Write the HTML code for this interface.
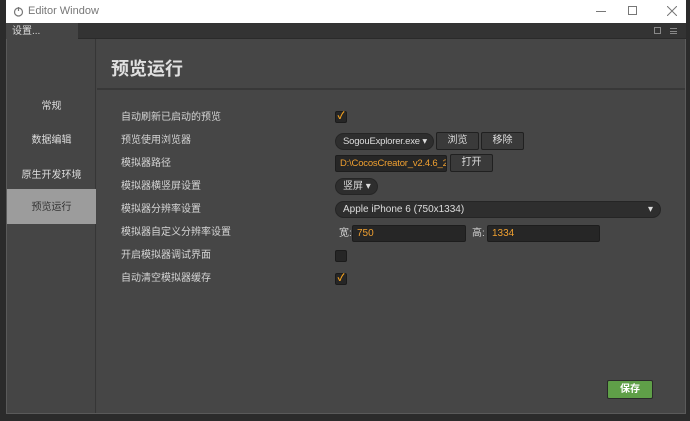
<!DOCTYPE html>
<html><head><meta charset="utf-8"><style>
*{margin:0;padding:0;box-sizing:border-box}
body{width:690px;height:421px;background:#2b2b2b;position:relative;overflow:hidden;font-family:"Liberation Sans","Noto Sans CJK SC",sans-serif;font-size:10px;color:#d0d0d0;line-height:12px}
.a{position:absolute}
.title{left:6px;top:0;width:680px;height:23px;background:#fff;color:#777;font-size:11px}
.tabbar{left:6px;top:23px;width:680px;height:16px;background:#333;border-bottom:1px solid #2a2a2a}
.tab{left:6px;top:23px;width:72px;height:17px;background:#454545;color:#ddd;padding:3px 0 0 6px}
.win{left:6px;top:39px;width:680px;height:375px;background:#454545;border:1px solid #5a5a5a;border-top:none}
.side{left:7px;top:39px;width:89px;height:374px;background:#454545;border-right:1px solid #363636}
.si{position:absolute;left:0;width:89px;text-align:center;color:#ddd}
.main{left:97px;top:39px;width:588px;height:374px;background:#464646}
.lbl{position:absolute;left:121px;color:#d4d4d4}
.cb{position:absolute;left:335px;width:12px;height:12px;background:#262626;border:1px solid #1b1b1b;border-radius:2px;color:#f0a020;font-size:10px;line-height:10px;text-align:center;font-weight:bold}
.pill{position:absolute;background:#2e2e2e;border:1px solid #252525;border-radius:9px;color:#ddd;padding-left:7px;height:17px;line-height:15px;white-space:nowrap;overflow:hidden}
.btn{position:absolute;background:#3a3a3a;border:1px solid #202020;border-radius:2px;color:#ddd;text-align:center;height:18px;line-height:16px}
.inp{position:absolute;background:#262626;border:1px solid #1d1d1d;border-radius:2px;color:#f0a030;padding-left:4px;height:17px;line-height:15px;overflow:hidden;white-space:nowrap}
</style></head><body>
<div class="a title"><svg class="a" style="left:7px;top:6px" width="11" height="11" viewBox="0 0 11 11"><circle cx="5.5" cy="6" r="4" fill="none" stroke="#777" stroke-width="1.2"/><path d="M5.5 1 L5.5 5" stroke="#777" stroke-width="1.2"/></svg><span class="a" style="left:22px;top:5px">Editor Window</span>
<div class="a" style="left:590px;top:11px;width:10px;height:1px;background:#777"></div>
<div class="a" style="left:622px;top:6px;width:9px;height:9px;border:1px solid #777"></div>
<svg class="a" style="left:661px;top:6px" width="10" height="10"><path d="M0 0L10 10M10 0L0 10" stroke="#777"/></svg></div>
<div class="a tabbar"></div>
<div class="a tab">设置...</div>
<div class="a" style="left:654px;top:27px;width:7px;height:7px;border:1px solid #888"></div>
<div class="a" style="left:670px;top:28px;width:7px;height:6px;border-top:1px solid #888;border-bottom:1px solid #888"><div style="margin-top:1.5px;height:1px;background:#888"></div></div>
<div class="a win"></div>
<div class="a side">
<div class="si" style="top:62px">常规</div>
<div class="si" style="top:96px">数据编辑</div>
<div class="si" style="top:131px">原生开发环境</div>
<div class="si" style="top:150px;height:35px;background:#9c9c9c;color:#333;padding-top:13px">预览运行</div>
</div>
<div class="a main">
<div class="a" style="left:14px;top:19px;font-size:18px;line-height:22px;font-weight:bold;color:#e0e0e0">预览运行</div>
<div class="a" style="left:0;top:49px;width:588px;height:2px;background:#383838"></div>
</div>
<div class="lbl" style="top:112px">自动刷新已启动的预览</div>
<div class="lbl" style="top:135px">预览使用浏览器</div>
<div class="lbl" style="top:158px">模拟器路径</div>
<div class="lbl" style="top:181px">模拟器横竖屏设置</div>
<div class="lbl" style="top:204px">模拟器分辨率设置</div>
<div class="lbl" style="top:227px">模拟器自定义分辨率设置</div>
<div class="lbl" style="top:250px">开启模拟器调试界面</div>
<div class="lbl" style="top:273px">自动清空模拟器缓存</div>
<div class="cb" style="top:111px">✓</div>
<div class="pill" style="left:335px;top:133px;width:99px;font-size:9.5px;letter-spacing:-0.2px">SogouExplorer.exe ▾</div>
<div class="btn" style="left:436px;top:132px;width:43px">浏览</div>
<div class="btn" style="left:481px;top:132px;width:43px">移除</div>
<div class="inp" style="left:335px;top:155px;width:112px;font-size:9.5px;letter-spacing:-0.2px">D:\CocosCreator_v2.4.6_2</div>
<div class="btn" style="left:450px;top:154px;width:43px">打开</div>
<div class="pill" style="left:335px;top:178px;width:43px">竖屏 ▾</div>
<div class="pill" style="left:335px;top:201px;width:326px">Apple iPhone 6 (750x1334)<span style="position:absolute;right:7px;top:0">▾</span></div>
<div class="a" style="left:339px;top:228px">宽:</div>
<div class="inp" style="left:352px;top:225px;width:114px">750</div>
<div class="a" style="left:472px;top:228px">高:</div>
<div class="inp" style="left:487px;top:225px;width:113px">1334</div>
<div class="cb" style="top:250px"></div>
<div class="cb" style="top:273px">✓</div>
<div class="btn" style="left:607px;top:380px;width:46px;height:19px;line-height:17px;background:#5f9f48;border-color:#2a2a2a;color:#fff;font-weight:bold">保存</div>
</body></html>
